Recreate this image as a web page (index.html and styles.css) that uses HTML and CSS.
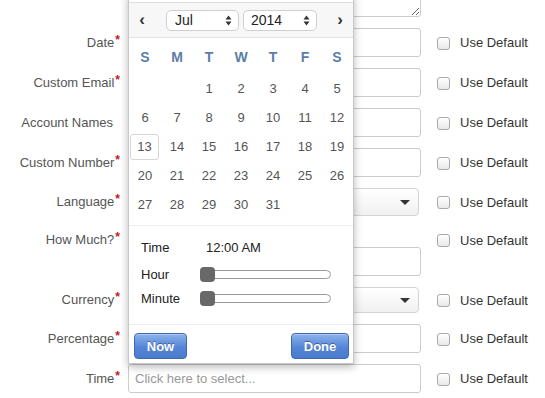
FILE: index.html
```html
<!DOCTYPE html>
<html>
<head>
<meta charset="utf-8">
<link rel="stylesheet" href="styles.css">
</head>
<body>
<div class="page">
  <form class="form">
    <div class="row">
      <span class="label"></span>
      <textarea class="textarea"></textarea>
    </div>
    <div class="row">
      <label class="label">Date<span class="req">*</span></label>
      <div class="input"></div>
      <label class="default"><span class="check"></span>Use Default</label>
    </div>
    <div class="row">
      <label class="label">Custom Email<span class="req">*</span></label>
      <div class="input"></div>
      <label class="default"><span class="check"></span>Use Default</label>
    </div>
    <div class="row">
      <label class="label">Account Names</label>
      <div class="input"></div>
      <label class="default"><span class="check"></span>Use Default</label>
    </div>
    <div class="row">
      <label class="label">Custom Number<span class="req">*</span></label>
      <div class="input"></div>
      <label class="default"><span class="check"></span>Use Default</label>
    </div>
    <div class="row">
      <label class="label">Language<span class="req">*</span></label>
      <div class="select select-tall"><span class="caret"></span></div>
      <label class="default"><span class="check"></span>Use Default</label>
    </div>
    <div class="row row-top">
      <label class="label">How Much?<span class="req">*</span></label>
      <div class="field-stack">
        <div class="field-note"></div>
        <div class="input"></div>
      </div>
      <label class="default"><span class="check"></span>Use Default</label>
    </div>
    <div class="row">
      <label class="label">Currency<span class="req">*</span></label>
      <div class="select select-short"><span class="caret"></span></div>
      <label class="default"><span class="check"></span>Use Default</label>
    </div>
    <div class="row">
      <label class="label">Percentage<span class="req">*</span></label>
      <div class="input"></div>
      <label class="default"><span class="check"></span>Use Default</label>
    </div>
    <div class="row">
      <label class="label">Time<span class="req">*</span></label>
      <div class="input placeholder">Click here to select...</div>
      <label class="default"><span class="check"></span>Use Default</label>
    </div>
  </form>

  <div class="picker">
    <div class="picker-head">
      <span class="nav">&#8249;</span>
      <div class="mini-select mini-month">Jul<svg class="updown" width="7" height="11" viewBox="0 0 7 11"><path d="M3.5 0.5 L6.5 4.5 L0.5 4.5 Z M3.5 10.5 L6.5 6.5 L0.5 6.5 Z" fill="#333"/></svg></div>
      <div class="mini-select mini-year">2014<svg class="updown" width="7" height="11" viewBox="0 0 7 11"><path d="M3.5 0.5 L6.5 4.5 L0.5 4.5 Z M3.5 10.5 L6.5 6.5 L0.5 6.5 Z" fill="#333"/></svg></div>
      <span class="nav">&#8250;</span>
    </div>
    <div class="weekdays">
      <span>S</span><span>M</span><span>T</span><span>W</span><span>T</span><span>F</span><span>S</span>
    </div>
    <div class="days">
      <span></span><span></span><span>1</span><span>2</span><span>3</span><span>4</span><span>5</span>
      <span>6</span><span>7</span><span>8</span><span>9</span><span>10</span><span>11</span><span>12</span>
      <span><b class="today">13</b></span><span>14</span><span>15</span><span>16</span><span>17</span><span>18</span><span>19</span>
      <span>20</span><span>21</span><span>22</span><span>23</span><span>24</span><span>25</span><span>26</span>
      <span>27</span><span>28</span><span>29</span><span>30</span><span>31</span><span></span><span></span>
    </div>
    <div class="time">
      <div class="time-row first"><span class="t-label">Time</span><span class="t-value">12:00 AM</span></div>
      <div class="time-row hour"><span class="t-label">Hour</span><div class="track"><span class="knob"></span></div></div>
      <div class="time-row minute"><span class="t-label">Minute</span><div class="track"><span class="knob"></span></div></div>
    </div>
    <div class="picker-foot">
      <button class="btn btn-now" type="button">Now</button>
      <button class="btn btn-done" type="button">Done</button>
    </div>
  </div>
</div>
</body>
</html>
```

FILE: styles.css
```css
* { box-sizing: border-box; }
html, body { margin: 0; padding: 0; background: #fff; overflow: hidden; }
body {
  font-family: "Liberation Sans", Arial, sans-serif;
  font-size: 13px;
  color: #555;
}
.page { position: relative; display: flow-root; width: 545px; height: 398px; }

.form { margin-top: -33px; }
.row {
  display: grid;
  grid-template-columns: 128px 293px auto;
  align-items: center;
  margin-bottom: 11px;
}
.row-top { align-items: start; }
.label {
  display: block;
  height: 24px;
  text-align: right;
  padding-right: 15px;
  line-height: 24px;
  color: #555;
  white-space: nowrap;
}
.row-top .label { margin-top: 1px; }
.req {
  color: #c4161c;
  font-weight: bold;
  margin-right: -7px;
  margin-left: 1px;
  line-height: 0;
  vertical-align: 3px;
  font-size: 12px;
}
.textarea {
  display: block;
  width: 293px;
  height: 50px;
  border: 1px solid #ccc;
  border-radius: 3px;
  margin: 0;
  font: inherit;
}
.input {
  height: 29px;
  border: 1px solid #ccc;
  border-radius: 3px;
  background: #fff;
}
.placeholder {
  color: #999;
  padding-left: 6px;
  line-height: 27px;
  font-size: 13px;
}
.select {
  width: 291px;
  border: 1px solid #d4d4d4;
  border-radius: 4px;
  background: linear-gradient(#ffffff, #f1f1f1);
  display: flex;
  align-items: center;
  justify-content: flex-end;
  padding-right: 8px;
}
.select-tall { height: 28px; }
.select-short { height: 26px; }
.caret {
  width: 0; height: 0;
  border-left: 5px solid transparent;
  border-right: 5px solid transparent;
  border-top: 5px solid #333;
}
.field-note { height: 20px; }

.default {
  display: flex;
  align-items: center;
  height: 24px;
  margin-left: 16px;
  color: #333;
  white-space: nowrap;
}
.row-top .default { margin-top: 1px; }
.check {
  width: 13px;
  height: 13px;
  border: 1px solid #a9a9a9;
  border-radius: 3px;
  background: linear-gradient(#ffffff, #e9e9e9);
  margin-right: 10px;
  margin-top: 1px;
}

/* date picker overlay */
.picker {
  position: absolute;
  left: 128px;
  top: -6px;
  width: 226px;
  background: #fff;
  border: 1px solid #c8c8c8;
  border-top: none;
  padding-top: 8px;
  box-shadow: 0 3px 8px rgba(0,0,0,0.28);
}
.picker-head {
  height: 36px;
  background: #f7f7f7;
  border-top: 1px solid #e0e0e0;
  border-bottom: 1px solid #e3e3e3;
  display: flex;
  align-items: center;
  padding: 0 0 0 6px;
  color: #333;
}
.nav {
  font-size: 17px;
  font-weight: bold;
  line-height: 1;
  width: 14px;
  text-align: center;
  margin-top: -1px;
}
.nav:last-child { margin-left: 16px; }
.mini-select {
  height: 21px;
  border: 1px solid #cfcfcf;
  border-radius: 5px;
  background: #fff;
  display: flex;
  align-items: center;
  justify-content: space-between;
  padding: 0 6px 0 8px;
  font-size: 14px;
  color: #222;
}
.mini-month { width: 73px; margin-left: 17px; }
.mini-year { width: 74px; margin-left: 4px; padding-left: 7px; }
.updown { display: block; }

.weekdays, .days {
  display: grid;
  grid-template-columns: repeat(7, 1fr);
}
.weekdays { height: 36px; align-items: center; }
.weekdays span {
  text-align: center;
  font-weight: bold;
  font-size: 14px;
  color: #5a7ea8;
  padding-top: 2px;
}
.days { grid-auto-rows: 29px; padding-bottom: 6px; border-bottom: 1px solid #eee; }
.days span {
  display: flex;
  align-items: center;
  justify-content: center;
  font-size: 13px;
  color: #555;
}
.today {
  font-weight: normal;
  width: 29px;
  height: 26px;
  border: 1px solid #d6d6d6;
  border-radius: 3px;
  display: flex;
  align-items: center;
  justify-content: center;
  margin-left: -1px;
}

.time {
  padding: 12px 0 17px 12px;
  border-bottom: 1px solid #eee;
  color: #222;
}
.time-row {
  display: flex;
  align-items: center;
  height: 18px;
}
.time-row.hour { margin-top: 9px; }
.time-row.minute { margin-top: 6px; }
.t-label { width: 59px; }
.t-value { margin-left: 6px; }
.track {
  width: 131px;
  height: 9px;
  border: 1px solid #9a9a9a;
  border-radius: 5px;
  background: #fff;
  display: flex;
  align-items: center;
}
.knob {
  width: 15px;
  height: 15px;
  border-radius: 4px;
  background: #686868;
  margin-left: -1px;
  flex: none;
}

.picker-foot {
  display: flex;
  justify-content: space-between;
  padding: 8px 4px 4px 5px;
}
.btn {
  height: 26px;
  border: 1px solid #3d69b2;
  border-radius: 4px;
  background: linear-gradient(#8db3ec, #5585d6 55%, #4a7bcd);
  color: #fff;
  font-family: "Liberation Sans", Arial, sans-serif;
  font-weight: bold;
  font-size: 13px;
  text-shadow: 0 -1px 0 rgba(0,0,0,0.35);
  box-shadow: inset 0 1px 0 rgba(255,255,255,0.3);
  padding: 0;
}
.btn-now { width: 53px; }
.btn-done { width: 58px; }
```
